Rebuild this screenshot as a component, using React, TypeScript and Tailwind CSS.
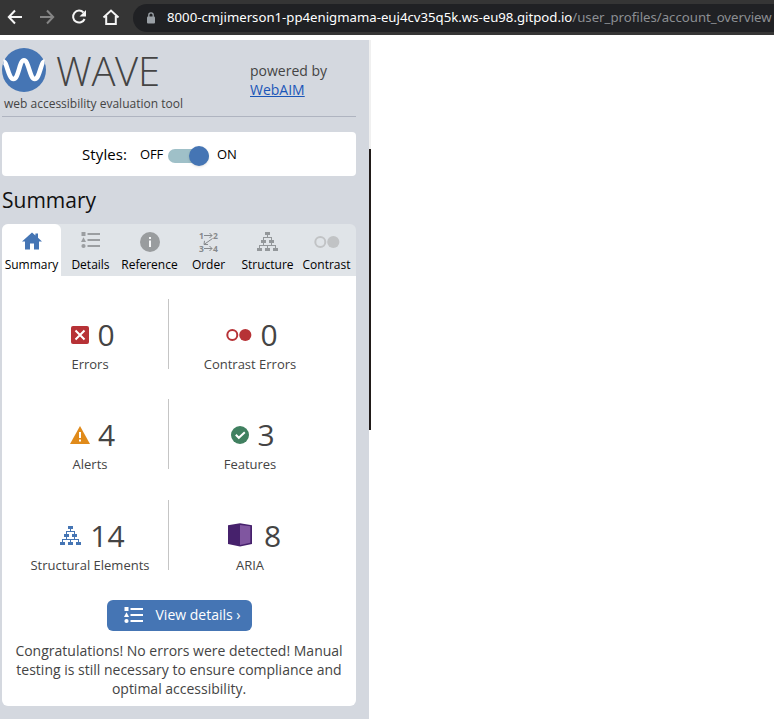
import React from "react";

function ListIcon({ className }: { className: string }) {
  return (
    <svg width="20" height="18" viewBox="0 0 20 18" className={className} fill="currentColor">
      <rect x="0.5" y="1" width="4" height="4" />
      <path d="M2.5 6.2 L5 11 H0Z" />
      <circle cx="2.5" cy="15" r="2.1" />
      <rect x="6.5" y="2" width="12.5" height="2" />
      <rect x="6.5" y="8" width="12.5" height="2" />
      <rect x="6.5" y="14" width="12.5" height="2" />
    </svg>
  );
}

function TreeIcon({ className }: { className: string }) {
  return (
    <svg width="22" height="20" viewBox="0 0 22 20" className={className} fill="currentColor" shapeRendering="crispEdges">
      <rect x="8" y="0" width="5" height="3" />
      <rect x="4" y="8" width="5" height="3" />
      <rect x="12" y="8" width="5" height="3" />
      <rect x="0" y="16" width="5" height="3" />
      <rect x="8" y="16" width="5" height="3" />
      <rect x="16" y="16" width="5" height="3" />
      <path d="M10 3h1v2h4v3h-1v-2h-7v2h-1v-3h4z" />
      <path d="M6 11h1v2h7v-2h1v2h4v3h-1v-2h-7v2h-1v-2h-7v2h-1v-3h4z" />
    </svg>
  );
}

function HomeIcon() {
  return (
    <svg width="20" height="18" viewBox="0 0 20 18" fill="#4575b4" className="-translate-y-px">
      <path d="M10 0.5 L13.4 3.5 V1.5 H16 V5.8 L20 9.5 H17 V17.5 H12 V11.5 H8 V17.5 H3 V9.5 H0Z" />
    </svg>
  );
}

function InfoIcon() {
  return (
    <svg width="20" height="20" viewBox="0 0 20 20">
      <circle cx="10" cy="10" r="10" fill="#999c9e" />
      <path d="M9 5h2v2H9zM9 8.5h2V15H9z" fill="#f5f6f7" />
    </svg>
  );
}

function OrderIcon() {
  return (
    <svg width="20" height="20" viewBox="0 0 20 20" fill="#86898c" className="overflow-visible">
      <g fontFamily="Open Sans, sans-serif" fontSize="8.5" fontWeight="700">
        <text x="0" y="6.5">1</text>
        <text x="14" y="6.5">2</text>
        <text x="0" y="19.5">3</text>
        <text x="14" y="19.5">4</text>
      </g>
      <path d="M5 3.5h8M10.5 1l2.5 2.5L10.5 6M5 16.5h8M10.5 14l2.5 2.5-2.5 2.5M13.5 6.5L5 12.5M5.5 8.8L5 12.5h4" fill="none" stroke="#86898c" />
    </svg>
  );
}

function ContrastIcon({ className }: { className: string }) {
  return (
    <svg width="26" height="14" viewBox="0 0 26 14" className={className}>
      <circle cx="6.3" cy="7" r="5" fill="none" stroke="currentColor" strokeWidth="2" />
      <circle cx="19.3" cy="7" r="6.1" fill="currentColor" />
    </svg>
  );
}

const tabs = [
  { label: "Summary", icon: <HomeIcon /> },
  { label: "Details", icon: <ListIcon className="-translate-y-0.5 text-[#9b9ea1]" /> },
  { label: "Reference", icon: <InfoIcon /> },
  { label: "Order", icon: <OrderIcon /> },
  { label: "Structure", icon: <TreeIcon className="text-[#93979a]" /> },
  { label: "Contrast", icon: <ContrastIcon className="text-[#c1c3c5]" /> },
];

const stats = [
  {
    label: "Errors", value: "0", spacing: "gap-2 pl-1.5",
    icon: (
      <svg width="18" height="18" viewBox="0 0 18 18">
        <rect width="18" height="18" rx="2" fill="#b73236" />
        <path d="M4.5 4.5l9 9M13.5 4.5l-9 9" stroke="#fff" strokeWidth="2" />
      </svg>
    ),
  },
  { label: "Contrast Errors", value: "0", spacing: "gap-2 pl-1", icon: <ContrastIcon className="text-[#b73236]" /> },
  {
    label: "Alerts", value: "4", spacing: "gap-2 pl-[5px]",
    icon: (
      <svg width="20" height="18" viewBox="0 0 20 18">
        <path d="M10 0L20 18H0z" fill="#e08a1a" />
        <path d="M9 6h2v6H9zM9 13.5h2v2H9z" fill="#fff" />
      </svg>
    ),
  },
  {
    label: "Features", value: "3", spacing: "gap-2 pl-1.5",
    icon: (
      <svg width="18" height="18" viewBox="0 0 18 18">
        <circle cx="9" cy="9" r="9" fill="#408060" />
        <path d="M4.8 8.8l3 3 6-5.5" fill="none" stroke="#fff" strokeWidth="2" />
      </svg>
    ),
  },
  { label: "Structural Elements", value: "14", spacing: "gap-2 pl-[5px]", icon: <TreeIcon className="text-[#4575b4]" /> },
  {
    label: "ARIA", value: "8", spacing: "gap-3 pl-[9px]",
    icon: (
      <svg width="24" height="24" viewBox="0 0 24 24" className="-translate-y-px">
        <path d="M0 2.2L12 0.3L24 2.2V21L12 23.6L0 21z" fill="#46216c" />
        <path d="M12 2L22.3 3.3V19.7L12 22z" fill="#8056a0" />
      </svg>
    ),
  },
];

function BrowserBar() {
  return (
    <header className="flex h-[35px] items-center bg-[#353535]">
      <svg width="133" height="35" viewBox="0 0 133 35" fill="none" stroke="#f5f5f5" strokeWidth="2" className="shrink-0">
        <path d="M22 17H9M15 10.5L8.8 17L15 23.5" />
        <path d="M40 17h13M47 10.5L53.2 17L47 23.5" stroke="#858585" />
        <path d="M83.5 12.5A6 6 0 1 0 84.6 19" />
        <path d="M86 10v6.5h-6.5z" fill="#f5f5f5" stroke="none" />
        <path d="M103.5 17.5L111 10.5L118.5 17.5M106.2 16V24h9.6V16" />
      </svg>
      <div className="flex h-7 flex-1 items-center overflow-hidden rounded-l-full bg-[#202124] pl-3.5">
        <svg width="8" height="12" viewBox="0 0 8 12" className="shrink-0">
          <rect y="4.5" width="8" height="7" rx="1" fill="#9aa0a6" />
          <path d="M1.8 5V3a2.2 2.2 0 0 1 4.4 0v2" fill="none" stroke="#9aa0a6" strokeWidth="1.3" />
        </svg>
        <p className="ml-3 whitespace-nowrap font-['Noto_Sans',sans-serif] text-[13.2px] text-white">
          8000-cmjimerson1-pp4enigmama-euj4cv35q5k.ws-eu98.gitpod.io
          <span className="text-[#8c8f93]">/user_profiles/account_overview</span>
        </p>
      </div>
    </header>
  );
}

export default function App() {
  return (
    <div className="h-[719px] w-[774px] overflow-hidden bg-white font-['Open_Sans',sans-serif]">
      <BrowserBar />
      <div className="mt-[5px] flex h-[679px]">
        <aside className="w-[369px] bg-[#d4d8df] pl-0.5 pr-[13px]">
          <div className="flex h-[77px] justify-between border-b border-[#afb4c0]">
            <div className="pt-2 text-[#444]">
              <div className="flex h-11 items-center">
                <svg width="44" height="44" viewBox="0 0 44 44">
                  <circle cx="22" cy="22" r="22" fill="#4575b4" />
                  <path d="M1.5 13.5C5 13.5 6.3 31 11.5 31S17.3 12.3 22 12.3S27.7 31 32.7 31S38.8 13.5 42.5 13.5" fill="none" stroke="#fff" strokeWidth="4.6" />
                </svg>
                <span className="ml-2.5 translate-y-px text-[40px] font-light leading-[44px] tracking-[-0.3px]">WAVE</span>
              </div>
              <p className="ml-0.5 mt-1 text-xs leading-4">web accessibility evaluation tool</p>
            </div>
            <p className="w-[106px] pt-[21px] text-sm leading-[19px] text-[#444]">
              powered by
              <br />
              <a className="text-[#1a56b8] underline">WebAIM</a>
            </p>
          </div>
          <div className="mt-[15px] flex h-11 items-center rounded bg-white pl-20 text-black">
            <span className="w-[58px] text-[15px] tracking-[0.1px]">Styles:</span>
            <span className="w-7 translate-y-px text-[13px] tracking-[-0.1px]">OFF</span>
            <span className="mt-[3px] flex h-3.5 w-[41px] items-center justify-end rounded-full bg-[#9fc0c8]">
              <span className="h-5 w-5 rounded-full bg-[#4575b4] shadow" />
            </span>
            <span className="ml-2 translate-y-px text-[13px] tracking-[-0.1px]">ON</span>
          </div>
          <h1 className="mt-2 h-10 text-[21px] leading-8 text-[#111]">Summary</h1>
          <nav className="grid h-[52px] grid-cols-6 rounded-t-md bg-[#e0e4e8] text-xs text-black">
            {tabs.map((t, i) => (
              <div key={t.label} className={i === 0 ? "flex flex-col items-center rounded-t-md bg-white" : "flex flex-col items-center"}>
                <div className="flex h-9 items-center justify-center">{t.icon}</div>
                <span className="-mt-1 whitespace-nowrap leading-[18px]">{t.label}</span>
              </div>
            ))}
          </nav>
          <main className="h-[430px] rounded-b-md bg-white pt-[23px] text-[#444]">
            <div className="grid grid-cols-[167px_187px] grid-rows-[100px_101px_70px]">
              {stats.map((s, i) => (
                <section key={s.label} className={i % 2 === 0 ? "flex h-[70px] flex-col items-center border-r border-[#c5c5c5] pl-[10px]" : "flex h-[70px] flex-col items-center pr-[25px]"}>
                  <div className={`mt-[18px] flex h-9 items-center ${s.spacing}`}>
                    {s.icon}
                    <span className="text-[30px] leading-9">{s.value}</span>
                  </div>
                  <span className="mt-0.5 whitespace-nowrap text-[13px] leading-[18px]">{s.label}</span>
                </section>
              ))}
            </div>
            <button className="mx-auto mt-[30px] flex h-[31px] w-[145px] items-center rounded-md bg-[#4575b4] pl-[17px] text-sm text-white">
              <ListIcon className="-translate-y-px text-white" />
              <span className="ml-3 -translate-y-px whitespace-nowrap">View details ›</span>
            </button>
            <p className="mt-2.5 text-center text-sm leading-[19px]">
              Congratulations! No errors were detected! Manual<br />
              testing is still necessary to ensure compliance and<br />
              optimal accessibility.
            </p>
          </main>
        </aside>
        <div className="w-0.5 bg-[#f0f0f0]">
          <div className="h-[109px]" />
          <div className="h-[281px] bg-[#211b19]" />
          <div className="h-[289px] bg-white" />
        </div>
      </div>
    </div>
  );
}
